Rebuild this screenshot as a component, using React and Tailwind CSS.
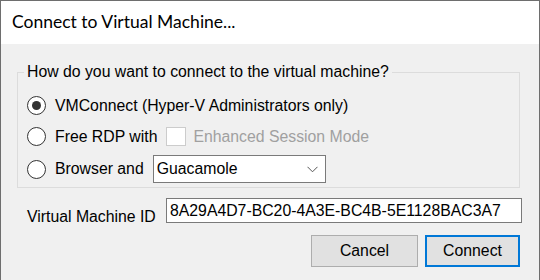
import React from 'react'

const Radio = ({ checked }) => (
  <span className="w-[19px] h-[19px] rounded-full border-[1.5px] border-[#333333] bg-white flex items-center justify-center shrink-0">
    {checked && <span className="w-[9px] h-[9px] rounded-full bg-[#333333]"></span>}
  </span>
)

const App = () => {
  return (
    <div className="w-[540px] h-[280px] border-l border-r border-t border-[#6e6e6e] bg-[#f0f0f0] flex flex-col text-[#000] font-['Liberation_Sans',Arial,sans-serif]">
      <div className="h-[43px] bg-white pl-[11px] flex items-center">
        <span className="text-[17.5px] font-['Lato',sans-serif] leading-none pb-[1px]">Connect to Virtual Machine...</span>
      </div>

      <fieldset className="mt-[19px] ml-[16px] w-[503px] border border-[#dcdcdc] pl-[9px] pb-[1px]">
        <legend className="-ml-[3px] px-[3px] text-[15.8px] leading-[18px]">How do you want to connect to the virtual machine?</legend>
        <div className="flex flex-col text-[15.8px] mt-[9px]">
          <label className="h-[31px] flex items-center gap-[9px]">
            <Radio checked />
            <span>VMConnect (Hyper-V Administrators only)</span>
          </label>
          <label className="h-[31px] flex items-center gap-[9px]">
            <Radio />
            <span>Free RDP with</span>
            <span className="w-[20px] h-[19px] border border-[#cccccc] bg-white"></span>
            <span className="text-[#a0a0a0] -ml-[2px]">Enhanced Session Mode</span>
          </label>
          <label className="h-[34px] flex items-center gap-[9px]">
            <Radio />
            <span>Browser and</span>
            <span className="w-[173px] h-[28px] border border-[#7a7a7a] bg-white flex items-center justify-between pl-[3px] pr-[7px]">
              <span>Guacamole</span>
              <svg width="11" height="7" viewBox="0 0 11 7" fill="none">
                <path d="M0.5 0.8 L5.5 5.8 L10.5 0.8" stroke="#555" strokeWidth="1" />
              </svg>
            </span>
          </label>
        </div>
      </fieldset>

      <div className="flex items-start h-[25px] mt-[10px] pl-[26px] text-[15.8px]">
        <span className="w-[139px] mt-[7px] leading-[24px]">Virtual Machine ID</span>
        <div className="w-[356px] h-[25px] border border-[#7a7a7a] bg-white pl-[3px] flex items-center">
          8A29A4D7-BC20-4A3E-BC4B-5E1128BAC3A7
        </div>
      </div>

      <div className="flex justify-end gap-[7px] mt-[12px] pr-[19px] text-[15.8px]">
        <button className="w-[107px] h-[32px] bg-[#e1e1e1] border border-[#adadad]">Cancel</button>
        <button className="w-[95px] h-[32px] bg-[#e1e1e1] border-2 border-[#0078d7]">Connect</button>
      </div>
    </div>
  )
}

export default App
